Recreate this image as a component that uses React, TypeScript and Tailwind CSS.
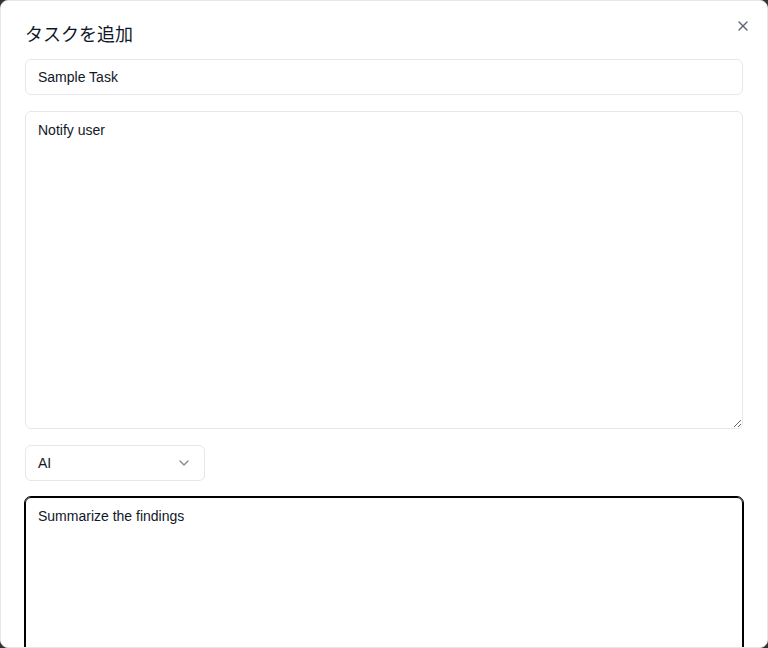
import React, { useState } from 'react';
import { X, ChevronDown } from 'lucide-react';

export default function App() {
  const [title, setTitle] = useState('Sample Task');
  const [notify, setNotify] = useState('Notify user');
  const [prompt, setPrompt] = useState('Summarize the findings');

  return (
    <div
      className="w-[768px] h-[648px] bg-[#333333]"
      style={{ fontFamily: '"Liberation Sans", "Noto Sans CJK JP", sans-serif' }}
    >
      {/* Dialog */}
      <div className="relative w-full h-full bg-white border border-gray-200 rounded-lg overflow-hidden">
        <button className="absolute right-[16px] top-[17px] text-gray-700 opacity-80">
          <X className="w-4 h-4" strokeWidth={2} />
        </button>

        <div className="px-6 pt-[26px] flex flex-col gap-4">
          <h2 className="text-lg leading-[16px] text-gray-900 font-normal">タスクを追加</h2>

          <input
            value={title}
            onChange={(e) => setTitle(e.target.value)}
            className="h-9 w-full rounded-md border border-gray-200 px-3 text-sm text-gray-900 outline-none"
          />

          <textarea
            value={notify}
            onChange={(e) => setNotify(e.target.value)}
            className="h-[318px] w-full rounded-md border border-gray-200 px-3 py-2 text-sm leading-5 text-gray-900 outline-none"
          />

          <button className="h-9 w-[180px] rounded-md border border-gray-200 px-3 flex items-center justify-between text-sm text-gray-900">
            <span>AI</span>
            <ChevronDown className="w-4 h-4 opacity-50" />
          </button>

          <textarea
            value={prompt}
            onChange={(e) => setPrompt(e.target.value)}
            className="h-[318px] w-full rounded-md border border-black outline-1 outline-solid outline-black px-3 py-2 text-sm leading-5 text-gray-900"
          />
        </div>
      </div>
    </div>
  );
}
